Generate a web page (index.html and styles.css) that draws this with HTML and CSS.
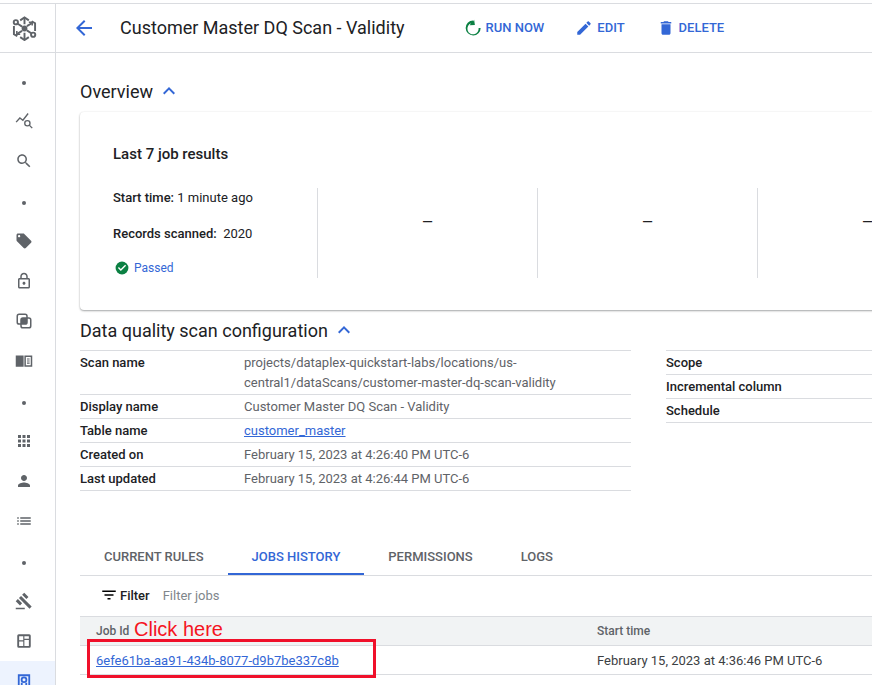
FILE: index.html
```html
<!DOCTYPE html>
<html lang="en">

<head>
    <meta charset="UTF-8">
    <meta name="viewport" content="width=device-width, initial-scale=1.0">
    <title>Customer Master DQ Scan - Validity</title>
    <link rel="stylesheet" href="styles.css">
</head>

<body>
    <div class="app">
        <aside class="rail">
            <div class="rail-logo">
                <svg class="logo" viewBox="0 0 26 26" fill="none" stroke="#5f6368" stroke-width="2">
                    <path d="M8.500 4.500 13 1.500l4.500 3M20.500 5.500l3.500 2v8M2 10.500v8.500l3.500 2M8.500 22l4.500 3 4.500-3" />
                    <path d="M13 2v6.500M13 17.500V24M15.500 10.500l5-3M5.500 18.500l5-3" />
                    <path d="M17.500 6.500h3.500v3.500M5 15.500v3.500h3.500" stroke-width="1.600" />
                    <circle cx="4" cy="6.500" r="2.200" />
                    <circle cx="22" cy="19.500" r="2.200" />
                    <path d="m6 8 4.500 3M15.500 15l4.500 3" />
                    <circle cx="13" cy="13" r="3" fill="#5f6368" stroke="none" />
                </svg>
            </div>
            <nav class="rail-nav">
                <a class="rail-item"><span class="dot"></span></a>
                <a class="rail-item">
                    <svg class="rail-icon line-icon" viewBox="0 0 24 24" stroke="#5f6368" stroke-width="1.800">
                        <path d="M1.500 13.500 6.500 8l4 3 7-9" />
                        <circle cx="16.500" cy="15" r="3.500" />
                        <path d="m19 17.500 4 4" />
                    </svg>
                </a>
                <a class="rail-item">
                    <svg class="rail-icon" viewBox="0 0 24 24"><path d="M15.500 14h-.79l-.28-.27C15.410 12.590 16 11.110 16 9.500 16 5.910 13.090 3 9.500 3S3 5.910 3 9.500 5.910 16 9.500 16c1.610 0 3.090-.59 4.230-1.570l.27.28v.79l5 4.990L20.490 19l-4.990-5zm-6 0C7.010 14 5 11.990 5 9.500S7.010 5 9.500 5 14 7.010 14 9.500 11.990 14 9.500 14z" /></svg>
                </a>
                <a class="rail-item"><span class="dot"></span></a>
                <a class="rail-item">
                    <svg class="rail-icon" viewBox="0 0 24 24"><path d="m21.410 11.580-9-9C12.050 2.220 11.550 2 11 2H4c-1.100 0-2 .9-2 2v7c0 .55.22 1.050.59 1.420l9 9c.36.36.86.58 1.410.58.55 0 1.050-.22 1.410-.59l7-7c.37-.36.59-.86.59-1.410 0-.55-.23-1.060-.59-1.420zM5.500 7C4.670 7 4 6.330 4 5.500S4.670 4 5.500 4 7 4.670 7 5.500 6.330 7 5.500 7z" /></svg>
                </a>
                <a class="rail-item">
                    <svg class="rail-icon" viewBox="0 0 24 24"><path d="M18 8h-1V6c0-2.760-2.240-5-5-5S7 3.240 7 6v2H6c-1.100 0-2 .9-2 2v10c0 1.100.9 2 2 2h12c1.100 0 2-.9 2-2V10c0-1.100-.9-2-2-2zM9 6c0-1.660 1.340-3 3-3s3 1.340 3 3v2H9V6zm9 14H6V10h12v10zm-6-3c1.100 0 2-.9 2-2s-.9-2-2-2-2 .9-2 2 .9 2 2 2z" /></svg>
                </a>
                <a class="rail-item">
                    <svg class="rail-icon" viewBox="0 0 24 24">
                        <rect x="8" y="8" width="8" height="8" />
                        <g class="line-icon" stroke="#5f6368" stroke-width="2">
                            <rect x="3" y="3" width="13" height="13" rx="2.500" />
                            <rect x="8" y="8" width="13" height="13" rx="2.500" />
                        </g>
                    </svg>
                </a>
                <a class="rail-item">
                    <svg class="rail-icon" viewBox="0 0 24 24"><path d="M1 4.500h10.500v15H1zM12.500 4.500H23v15H12.500zm2 2v11H21v-11zM16 8.500h3.500V10H16zm0 2.800h3.500v1.500H16zm0 2.800h3.500v1.500H16z" fill-rule="evenodd" /></svg>
                </a>
                <a class="rail-item"><span class="dot"></span></a>
                <a class="rail-item">
                    <svg class="rail-icon" viewBox="0 0 24 24"><path d="M4 8h4V4H4v4zm6 12h4v-4h-4v4zm-6 0h4v-4H4v4zm0-6h4v-4H4v4zm6 0h4v-4h-4v4zm6-10v4h4V4h-4zm-6 4h4V4h-4v4zm6 6h4v-4h-4v4zm0 6h4v-4h-4v4z" /></svg>
                </a>
                <a class="rail-item">
                    <svg class="rail-icon" viewBox="0 0 24 24"><path d="M12 12c2.210 0 4-1.790 4-4s-1.790-4-4-4-4 1.790-4 4 1.790 4 4 4zm0 2c-2.670 0-8 1.340-8 4v2h16v-2c0-2.660-5.330-4-8-4z" /></svg>
                </a>
                <a class="rail-item">
                    <svg class="rail-icon" viewBox="0 0 24 24"><path d="M3 13h2v-2H3v2zm0 4h2v-2H3v2zm0-8h2V7H3v2zm4 4h14v-2H7v2zm0 4h14v-2H7v2zM7 7v2h14V7H7z" /></svg>
                </a>
                <a class="rail-item"><span class="dot"></span></a>
                <a class="rail-item">
                    <svg class="rail-icon" viewBox="0 0 24 24"><path d="M1 21h12v2H1v-2zM5.245 8.070l2.830-2.827 14.140 14.142-2.828 2.828L5.245 8.070zM12.317 1l5.657 5.656-2.830 2.830-5.654-5.660L12.317 1zM3.825 9.485l5.657 5.657-2.828 2.828-5.657-5.657 2.828-2.828z" /></svg>
                </a>
                <a class="rail-item">
                    <svg class="rail-icon" viewBox="0 0 24 24"><path d="M5 3h14a2 2 0 0 1 2 2v14a2 2 0 0 1-2 2H5a2 2 0 0 1-2-2V5a2 2 0 0 1 2-2zm.5 2.500V11H11V5.500zm0 7V18.500H11v-6zm7-7V9h6V5.500zm0 5v8h6v-8z" fill-rule="evenodd" /></svg>
                </a>
                <a class="rail-item is-active">
                    <svg class="rail-icon line-icon" viewBox="0 0 24 24" stroke="#3367d6" stroke-width="2.400">
                        <path d="M5 3h14v17l-3.500-2-3.500 3-3.500-3L5 20z" />
                        <circle cx="12" cy="9" r="3.200" />
                        <path d="M9 13v6M15 13v6" />
                    </svg>
                </a>
            </nav>
        </aside>

        <main class="main">
            <header class="page-header">
                <svg class="back" viewBox="0 0 24 24"><path d="M20 11H7.830l5.590-5.590L12 4l-8 8 8 8 1.410-1.410L7.830 13H20v-2z" /></svg>
                <h1 class="page-title">Customer Master DQ Scan - Validity</h1>
                <div class="actions">
                    <a class="action action-run">
                        <svg viewBox="0 0 24 24"><path d="M12 3.200 13.500 1l1 7-7 .2 2-2.400A7.500 7.500 0 1 0 19.500 12h2.700A10 10 0 1 1 12 2z" /></svg>
                        RUN NOW
                    </a>
                    <a class="action action-edit">
                        <svg viewBox="0 0 24 24"><path d="M3 17.250V21h3.750L17.810 9.940l-3.750-3.750L3 17.250zM20.710 7.040c.39-.39.39-1.020 0-1.410l-2.340-2.340c-.39-.39-1.020-.39-1.410 0l-1.830 1.830 3.750 3.750 1.830-1.830z" /></svg>
                        EDIT
                    </a>
                    <a class="action action-delete">
                        <svg viewBox="0 0 24 24"><path d="M6 19c0 1.100.9 2 2 2h8c1.100 0 2-.9 2-2V7H6v12zM19 4h-3.500l-1-1h-5l-1 1H5v2h14V4z" /></svg>
                        DELETE
                    </a>
                </div>
            </header>

            <div class="content">
                <h2 class="section-title">Overview
                    <svg class="chevron" viewBox="0 0 24 24"><path d="m12 8-6 6 1.410 1.410L12 10.830l4.590 4.580L18 14z" /></svg>
                </h2>

                <section class="card">
                    <h3 class="card-title">Last 7 job results</h3>
                    <div class="results">
                        <div class="result-info">
                            <p class="info-line"><b>Start time:</b> 1 minute ago</p>
                            <p class="info-line"><b>Records scanned:</b>&nbsp; 2020</p>
                            <p class="status">
                                <svg viewBox="0 0 24 24"><circle cx="12" cy="12" r="11" fill="#0b8043" /><path d="m10 17-5-5 1.700-1.700 3.300 3.300 7.300-7.300L19 8z" fill="#fff" /></svg>
                                Passed
                            </p>
                        </div>
                        <div class="result-col">—</div>
                        <div class="result-col">—</div>
                        <div class="result-col">—</div>
                    </div>
                </section>

                <h2 class="section-title section-config">Data quality scan configuration
                    <svg class="chevron" viewBox="0 0 24 24"><path d="m12 8-6 6 1.410 1.410L12 10.830l4.590 4.580L18 14z" /></svg>
                </h2>

                <div class="config">
                    <dl class="config-table">
                        <div class="config-row"><dt>Scan name</dt><dd>projects/dataplex-quickstart-labs/locations/us-central1/dataScans/customer-master-dq-scan-validity</dd></div>
                        <div class="config-row"><dt>Display name</dt><dd>Customer Master DQ Scan - Validity</dd></div>
                        <div class="config-row"><dt>Table name</dt><dd><a class="link">customer_master</a></dd></div>
                        <div class="config-row"><dt>Created on</dt><dd>February 15, 2023 at 4:26:40 PM UTC-6</dd></div>
                        <div class="config-row"><dt>Last updated</dt><dd>February 15, 2023 at 4:26:44 PM UTC-6</dd></div>
                    </dl>
                    <dl class="config-table config-side">
                        <div class="config-row"><dt>Scope</dt></div>
                        <div class="config-row"><dt>Incremental column</dt></div>
                        <div class="config-row"><dt>Schedule</dt></div>
                    </dl>
                </div>

                <div class="tabs">
                    <a class="tab">CURRENT RULES</a>
                    <a class="tab is-active">JOBS HISTORY</a>
                    <a class="tab">PERMISSIONS</a>
                    <a class="tab">LOGS</a>
                </div>

                <div class="filter-bar">
                    <svg viewBox="0 0 24 24"><path d="M10 18h4v-2h-4v2zM3 6v2h18V6H3zm3 7h12v-2H6v2z" /></svg>
                    <b>Filter</b>
                    <span class="filter-hint">Filter jobs</span>
                </div>

                <div class="jobs">
                    <div class="jobs-row jobs-head">
                        <span class="job-id">Job Id</span>
                        <span>Start time</span>
                    </div>
                    <div class="jobs-row">
                        <span class="job-id"><a class="link">6efe61ba-aa91-434b-8077-d9b7be337c8b</a></span>
                        <span class="job-time">February 15, 2023 at 4:36:46 PM UTC-6</span>
                    </div>
                    <span class="note">Click here</span>
                    <span class="note-box"></span>
                </div>
            </div>
        </main>
    </div>
</body>

</html>
```

FILE: styles.css
```css
* {
    margin: 0;
    padding: 0;
    box-sizing: border-box;
}

html,
body {
    height: 100%;
    overflow: hidden;
}

body {
    background-color: #fff;
    color: #202124;
    font-family: Roboto, "Liberation Sans", sans-serif;
    padding-top: 3px;
}

.app {
    display: flex;
    height: 682px;
    border-top: 1px solid #dadce0;
}

/* left rail */
.rail {
    flex: 0 0 56px;
    border-right: 1px solid #dadce0;
    overflow: hidden;
}

.rail-logo {
    height: 49px;
    display: flex;
    align-items: center;
    justify-content: center;
    padding-right: 7px;
    border-bottom: 1px solid #dadce0;
}

.logo {
    width: 25px;
    height: 25px;
}

.rail-nav {
    padding-top: 10px;
}

.rail-item {
    height: 40px;
    display: flex;
    align-items: center;
    justify-content: center;
    padding-right: 7px;
}

.rail-item.is-active {
    background-color: #edf3fe;
    margin-top: -2px;
    padding-top: 1px;
}

.rail-icon {
    width: 18px;
    height: 18px;
    fill: #5f6368;
    margin-bottom: 4px;
}

.rail-icon.line-icon,
.line-icon {
    fill: none;
}

.rail-item.is-active .rail-icon {
    margin-bottom: 0;
}

.dot {
    width: 4px;
    height: 4px;
    border-radius: 50%;
    background-color: #5f6368;
}

/* page header */
.main {
    flex: 1;
    min-width: 0;
    overflow: hidden;
}

.page-header {
    height: 49px;
    display: flex;
    align-items: center;
    padding-left: 16px;
    padding-bottom: 1px;
    border-bottom: 1px solid #dadce0;
}

.back {
    width: 24px;
    height: 24px;
    fill: #3367d6;
}

.page-title {
    margin-left: 24px;
    font-size: 18px;
    font-weight: 400;
    white-space: nowrap;
}

.actions {
    display: flex;
    margin-left: 59px;
}

.action {
    display: flex;
    align-items: center;
    gap: 4px;
    font-size: 13px;
    font-weight: 500;
    color: #3367d6;
    white-space: nowrap;
}

.action svg {
    width: 18px;
    height: 18px;
    fill: #3367d6;
}

.action-run svg {
    fill: #0b8043;
}

.action-edit {
    margin-left: 31px;
}

.action-delete {
    margin-left: 32px;
}

/* content */
.content {
    width: 1000px;
    padding: 26px 0 0 24px;
}

.section-title {
    display: flex;
    align-items: center;
    gap: 4px;
    height: 24px;
    font-size: 18px;
    font-weight: 400;
}

.section-config {
    margin-top: 8px;
}

.chevron {
    width: 24px;
    height: 24px;
    fill: #3367d6;
}

.card {
    margin-top: 9px;
    height: 198px;
    padding: 33px 0 0 33px;
    border-radius: 4px;
    box-shadow: 0 1px 2px rgba(60, 64, 67, 0.45), 0 0 2px rgba(60, 64, 67, 0.08);
}

.card-title {
    font-size: 15px;
    font-weight: 500;
    line-height: 18px;
}

.results {
    display: flex;
    margin-top: 25px;
    height: 90px;
}

.result-info {
    flex: 0 0 204px;
}

.info-line {
    font-size: 13px;
    line-height: 20px;
    margin-bottom: 16px;
}

.info-line b {
    font-weight: 500;
}

.status {
    display: flex;
    align-items: center;
    gap: 5px;
    margin-left: 2px;
    font-size: 12px;
    line-height: 16px;
    color: #3367d6;
}

.status svg {
    width: 14px;
    height: 14px;
}

.result-col {
    flex: 0 0 220px;
    border-left: 1px solid #dadce0;
    display: flex;
    align-items: center;
    justify-content: center;
    padding-bottom: 22px;
    font-size: 14px;
}

/* config tables */
.config {
    display: flex;
    gap: 35px;
    margin-top: 8px;
}

.config-table {
    flex: 0 0 551px;
    border-top: 1px solid #dadce0;
}

.config-side {
    flex: 0 0 300px;
}

.config-row {
    display: flex;
    padding: 2px 0 1px;
    border-bottom: 1px solid #dadce0;
    font-size: 13px;
    line-height: 20px;
}

.config-row dt {
    flex: 0 0 164px;
    font-weight: 500;
}

.config-row dd {
    flex: 0 0 320px;
    color: #5f6368;
}

.config-side dt {
    flex-basis: auto;
}

.link {
    color: #3367d6;
    text-decoration: underline;
}

/* tabs */
.tabs {
    display: flex;
    margin-top: 47px;
    border-bottom: 1px solid #dadce0;
}

.tab {
    height: 37px;
    padding: 0 24px;
    display: flex;
    align-items: center;
    font-size: 13px;
    font-weight: 500;
    color: #5f6368;
}

.tab.is-active {
    color: #3367d6;
    border-bottom: 2px solid #3367d6;
    margin-bottom: -1px;
    padding-top: 2px;
}

.filter-bar {
    height: 40px;
    display: flex;
    align-items: center;
    padding: 0 0 2px 20px;
    font-size: 13px;
}

.filter-bar svg {
    width: 18px;
    height: 18px;
}

.filter-bar b {
    margin-left: 2px;
    font-weight: 500;
}

.filter-hint {
    margin-left: 13px;
    color: #80868b;
}

/* jobs table */
.jobs {
    position: relative;
}

.jobs-row {
    display: flex;
    align-items: center;
    height: 29px;
    border-bottom: 1px solid #dadce0;
    padding-left: 16px;
    font-size: 13px;
}

.jobs-head {
    height: 30px;
    background-color: #f1f3f4;
    border-top: 1px solid #dadce0;
    font-size: 12px;
    font-weight: 500;
    color: #5f6368;
}

.job-id {
    flex: 0 0 501px;
}

.job-time {
    color: #3c4043;
}

.note {
    position: absolute;
    left: 54px;
    top: 1px;
    color: #f5141e;
    font-family: "Liberation Sans", sans-serif;
    font-size: 20px;
    line-height: 24px;
}

.note-box {
    position: absolute;
    left: 7px;
    top: 23px;
    width: 289px;
    height: 39px;
    border: 3px solid #f0102a;
}
```
